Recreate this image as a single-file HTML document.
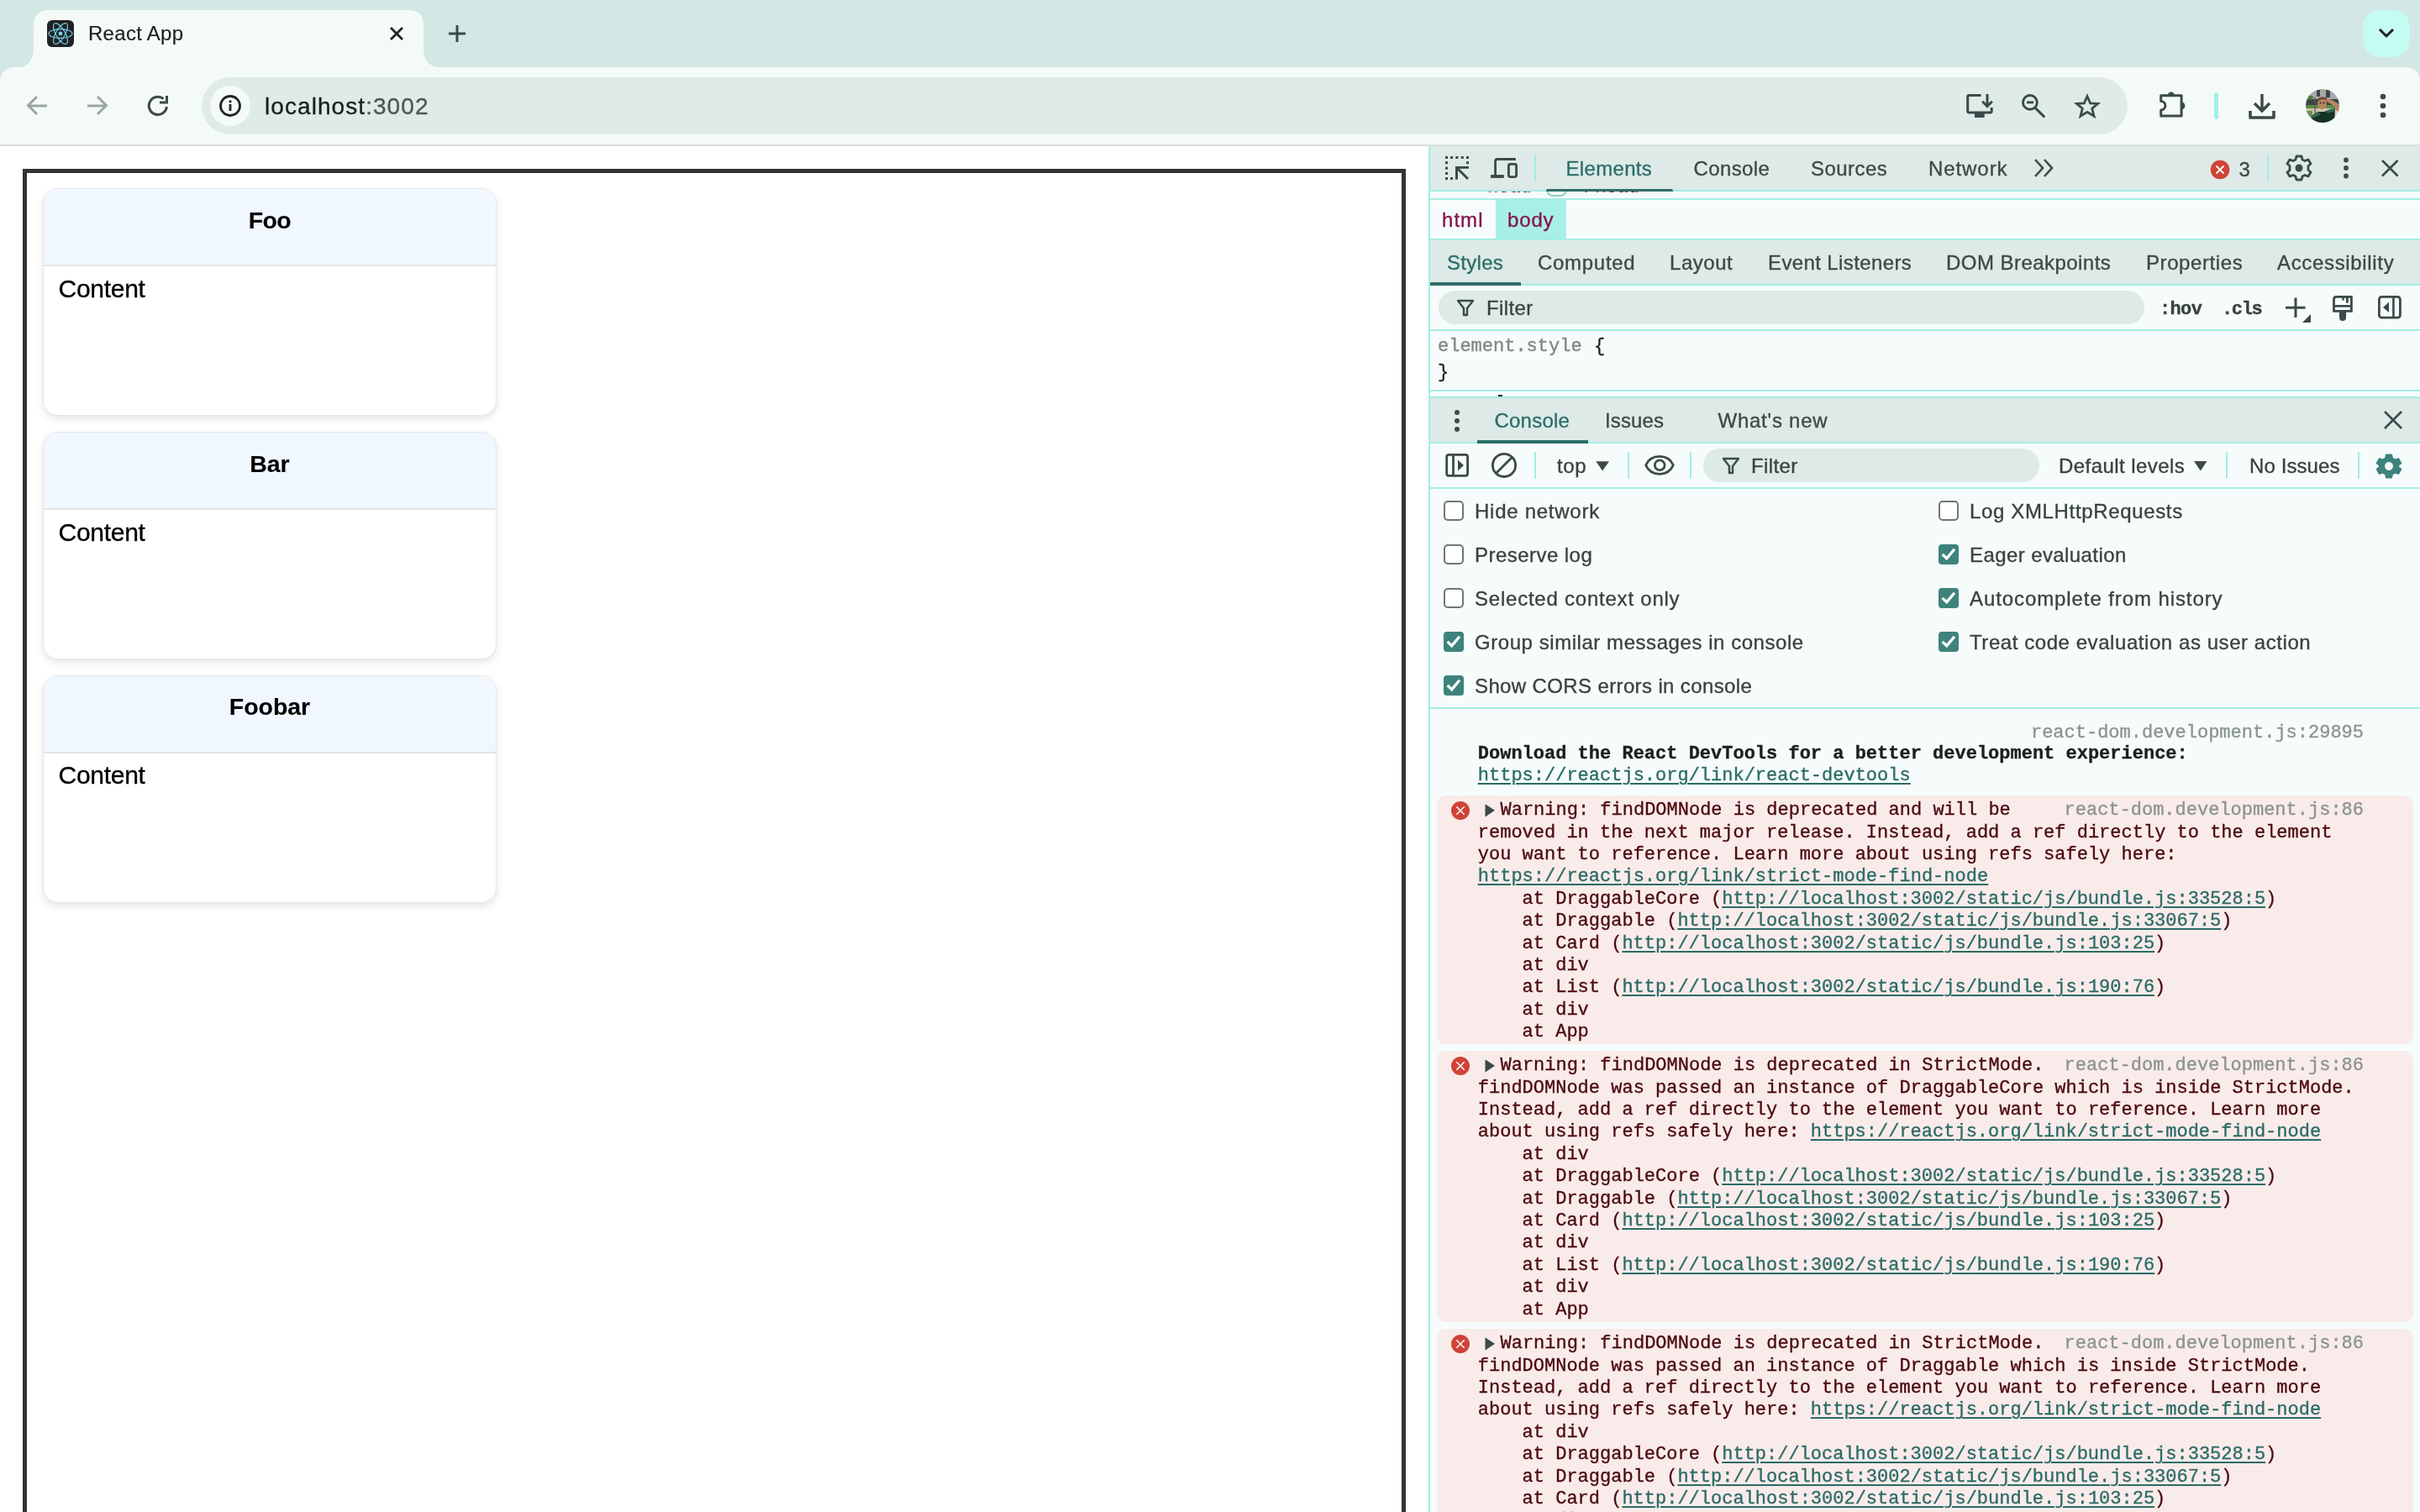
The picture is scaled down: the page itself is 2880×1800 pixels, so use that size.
<!DOCTYPE html>
<html><head><meta charset="utf-8"><title>React App</title>
<style>
html,body{margin:0;padding:0;width:2880px;height:1800px;overflow:hidden;background:#fff}
body{position:relative;font-family:"Liberation Sans",sans-serif}
.t{position:absolute;white-space:pre;line-height:normal;-webkit-text-stroke:0.35px currentColor}
svg{display:block}
@media (max-width:2000px){html{zoom:0.5}}
</style></head><body>
<div style="position:absolute;left:0px;top:0px;width:2880px;height:110px;background:#d3e7e4;"></div>
<div style="position:absolute;left:0px;top:80px;width:2880px;height:93px;background:#f4faf8;border-radius:16px 16px 0 0;"></div>
<svg style="position:absolute;left:0px;top:0px;" width="560" height="81" viewBox="0 0 560 81"><path d="M17 81 Q40 81 40 57 L40 30 Q40 12 58 12 L486 12 Q504 12 504 30 L504 57 Q504 81 527 81 Z" fill="#f4faf8"/></svg>
<svg style="position:absolute;left:56px;top:24px;" width="32" height="32" viewBox="0 0 32 32"><rect x="0" y="0" width="32" height="32" rx="6" fill="#222"/><g fill="none" stroke="#76d0ee" stroke-width="1.15" transform="translate(16 16)"><ellipse rx="14" ry="5.4"/><ellipse rx="14" ry="5.4" transform="rotate(60)"/><ellipse rx="14" ry="5.4" transform="rotate(120)"/></g><circle cx="16" cy="16" r="2.4" fill="#76d0ee"/></svg>
<svg style="position:absolute;left:462px;top:30px;" width="20" height="20" viewBox="0 0 20 20"><path d="M3 3 L17 17 M17 3 L3 17" stroke="#1f2322" stroke-width="2.8" stroke-linecap="butt"/></svg>
<svg style="position:absolute;left:532px;top:28px;" width="24" height="24" viewBox="0 0 24 24"><path d="M12 2 V22 M2 12 H22" stroke="#3b4a48" stroke-width="3"/></svg>
<div style="position:absolute;left:2812px;top:12px;width:56px;height:56px;background:#c4fbf2;border-radius:20px;"></div>
<svg style="position:absolute;left:2828px;top:30px;" width="24" height="20" viewBox="0 0 24 20"><path d="M4 5 L12 13 L20 5" fill="none" stroke="#1b2120" stroke-width="3"/></svg>
<svg style="position:absolute;left:28px;top:110px;" width="32" height="32" viewBox="0 0 32 32"><path d="M28 16 H7 M16 5 L5.5 15.5 L16 26" fill="none" stroke="#9aa6a4" stroke-width="3"/></svg>
<svg style="position:absolute;left:100px;top:110px;" width="32" height="32" viewBox="0 0 32 32"><path d="M4 16 H25 M16 5 L26.5 15.5 L16 26" fill="none" stroke="#9aa6a4" stroke-width="3"/></svg>
<svg style="position:absolute;left:172px;top:110px;" width="32" height="32" viewBox="0 0 32 32"><path d="M26.4 17 A10.6 10.6 0 1 1 22.6 7.7" fill="none" stroke="#3b4a48" stroke-width="3"/><path d="M18 12 H26.5 V4" fill="none" stroke="#3b4a48" stroke-width="3"/></svg>
<div style="position:absolute;left:240px;top:92px;width:2292px;height:68px;background:#dfebe8;border-radius:34px;"></div>
<div style="position:absolute;left:250px;top:102px;width:48px;height:48px;background:#f4faf8;border-radius:24px;"></div>
<svg style="position:absolute;left:258px;top:110px;" width="32" height="32" viewBox="0 0 32 32"><circle cx="16" cy="16" r="11.5" fill="none" stroke="#1f2624" stroke-width="2.8"/><rect x="14.6" y="14" width="2.8" height="8" fill="#1f2624"/><rect x="14.6" y="9.5" width="2.8" height="2.8" fill="#1f2624"/></svg>
<svg style="position:absolute;left:2338px;top:108px;" width="36" height="36" viewBox="0 0 36 36"><path d="M19.6 5.5 H5.5 Q3.7 5.5 3.7 7.3 V24.2 Q3.7 26 5.5 26 H30.4 Q32.2 26 32.2 24.2 V20" fill="none" stroke="#3b4a48" stroke-width="3"/><rect x="12" y="27" width="11.7" height="5" fill="#3b4a48"/><path d="M27 4 V18.5 M21.2 12.8 L27 18.6 L32.8 12.8" fill="none" stroke="#3b4a48" stroke-width="3"/></svg>
<svg style="position:absolute;left:2402px;top:108px;" width="36" height="36" viewBox="0 0 36 36"><circle cx="13.9" cy="13.9" r="8.4" fill="none" stroke="#3b4a48" stroke-width="2.9"/><path d="M10 13.9 H18" stroke="#3b4a48" stroke-width="2.9"/><path d="M20 20.4 L31.2 31.4" stroke="#3b4a48" stroke-width="3"/></svg>
<svg style="position:absolute;left:2466px;top:108px;" width="36" height="36" viewBox="0 0 36 36"><path d="M18 6.5 L21.6 14.8 L30.6 15.4 L23.7 21.3 L26 30.2 L18 25.3 L10 30.2 L12.3 21.3 L5.4 15.4 L14.4 14.8 Z" fill="none" stroke="#3b4a48" stroke-width="2.8" stroke-linejoin="miter"/></svg>
<svg style="position:absolute;left:2566px;top:106px;" width="40" height="40" viewBox="0 0 40 40"><path d="M5.7 7.7 H30.1 V32 H5.7 V25 A5.2 5.2 0 0 0 5.7 14.6 Z" fill="none" stroke="#3b4a48" stroke-width="3" stroke-linejoin="round"/><path d="M13.6 7.7 A4.3 4.3 0 0 1 22.2 7.7 Z" fill="#3b4a48"/><path d="M30.1 15.6 A4.3 4.3 0 0 1 30.1 24.2 Z" fill="#3b4a48"/></svg>
<div style="position:absolute;left:2635px;top:110px;width:5px;height:32px;background:#9ff0e5;border-radius:3px;"></div>
<svg style="position:absolute;left:2672px;top:106px;" width="40" height="40" viewBox="0 0 40 40"><path d="M20 6 V26 M11 17 L20 26 L29 17" fill="none" stroke="#3b4a48" stroke-width="3.4"/><path d="M6 26 V34 H34 V26" fill="none" stroke="#3b4a48" stroke-width="3.6" stroke-linejoin="round"/></svg>
<svg style="position:absolute;left:2744px;top:106px;" width="40" height="40" viewBox="0 0 40 40"><defs><clipPath id="av"><circle cx="20" cy="20" r="20"/></clipPath><filter id="bl"><feGaussianBlur stdDeviation="0.6"/></filter></defs><g clip-path="url(#av)"><g filter="url(#bl)"><rect x="-2" y="-2" width="44" height="44" fill="#cfc7b6"/><rect x="-2" y="-2" width="44" height="14" fill="#a7abab"/><rect x="13" y="1" width="4" height="8" fill="#3d4a52"/><rect x="24" y="1" width="5" height="9" fill="#3c4448"/><rect x="20" y="0" width="2" height="4" fill="#b9a94a"/><rect x="-2" y="12" width="44" height="9" fill="#3a4548"/><rect x="-2" y="19" width="44" height="4" fill="#5d8a4a"/><rect x="-2" y="23" width="16" height="10" fill="#c9c2ad"/><path d="M2 8 Q6 6 10 10 L6 13 Q4 11 2 14 Z" fill="#4f7a3c"/><rect x="10.5" y="10" width="1.2" height="20" fill="#5a5a48"/><rect x="0" y="26" width="8" height="8" fill="#6d8f50"/><rect x="32" y="24" width="10" height="18" fill="#e2d6c3"/><path d="M18 11 Q23 8 29 12 L40 18 L41 27 L36 26 L35 21 L27 16 Z" fill="#b98462"/><ellipse cx="19.5" cy="17.5" rx="5.4" ry="6.8" fill="#b98564"/><path d="M14 12 Q19 7 25 11 L25 13 Q19 11 15 14 Z" fill="#6b4a32"/><circle cx="17.5" cy="16.5" r="0.9" fill="#2a1a12"/><circle cx="21.5" cy="16.5" r="0.9" fill="#2a1a12"/><path d="M4 42 Q6 30 15 27 L22 27 Q30 24 35 23 L34 42 Z" fill="#163024"/><path d="M7 32 Q11 28 16 27.5 L17 31 Q12 32 9 35 Z" fill="#2f6a4f"/><path d="M24 26 Q30 23 35 23 L34 27 Q29 27 26 29 Z" fill="#2f6a4f"/></g></g></svg>
<svg style="position:absolute;left:2826px;top:108px;" width="20" height="36" viewBox="0 0 20 36"><circle cx="10" cy="7" r="3.3" fill="#3b4a48"/><circle cx="10" cy="18" r="3.3" fill="#3b4a48"/><circle cx="10" cy="29" r="3.3" fill="#3b4a48"/></svg>
<div style="position:absolute;left:0px;top:172px;width:2880px;height:2px;background:#d8dfdd;"></div>
<div style="position:absolute;left:0px;top:174px;width:1700px;height:1626px;background:#ffffff;"></div>
<div style="position:absolute;left:27px;top:201px;width:1646px;height:1700px;background:transparent;border:5px solid #333;box-sizing:border-box;"></div>
<div style="position:absolute;left:51px;top:224px;width:540px;height:271px;border-radius:18px;background:#fff;box-shadow:0 4px 10px rgba(0,0,0,0.10);border:1.5px solid #e6e6e6;box-sizing:border-box;overflow:hidden"><div style="height:90px;background:#f0f7fe;border-bottom:2px solid #e2e5e8"></div></div>
<div style="position:absolute;left:51px;top:514px;width:540px;height:271px;border-radius:18px;background:#fff;box-shadow:0 4px 10px rgba(0,0,0,0.10);border:1.5px solid #e6e6e6;box-sizing:border-box;overflow:hidden"><div style="height:90px;background:#f0f7fe;border-bottom:2px solid #e2e5e8"></div></div>
<div style="position:absolute;left:51px;top:804px;width:540px;height:271px;border-radius:18px;background:#fff;box-shadow:0 4px 10px rgba(0,0,0,0.10);border:1.5px solid #e6e6e6;box-sizing:border-box;overflow:hidden"><div style="height:90px;background:#f0f7fe;border-bottom:2px solid #e2e5e8"></div></div>
<div style="position:absolute;left:1700px;top:174px;width:2px;height:1626px;background:#a5ede3;"></div>
<div style="position:absolute;left:1702px;top:174px;width:1178px;height:1626px;background:#f6fcfb;"></div>
<div style="position:absolute;left:1702px;top:174px;width:1178px;height:52px;background:#ddeae7;"></div>
<div style="position:absolute;left:1702px;top:226px;width:1178px;height:2px;background:#a5ede3;"></div>
<div style="position:absolute;left:1840px;top:225px;width:151px;height:3px;background:#2d6e69;border-radius:2px 2px 0 0;"></div>
<svg style="position:absolute;left:1716px;top:183px;" width="36" height="36" viewBox="0 0 36 36"><rect x="4" y="3" width="3" height="3" fill="#3b4a48"/><rect x="10.1" y="3" width="3" height="3" fill="#3b4a48"/><rect x="16.3" y="3" width="3" height="3" fill="#3b4a48"/><rect x="22.8" y="3" width="3" height="3" fill="#3b4a48"/><rect x="29" y="3" width="3" height="3" fill="#3b4a48"/><rect x="4" y="9.2" width="3" height="3" fill="#3b4a48"/><rect x="4" y="15.7" width="3" height="3" fill="#3b4a48"/><rect x="4" y="21.9" width="3" height="3" fill="#3b4a48"/><rect x="4" y="28" width="3" height="3" fill="#3b4a48"/><rect x="29" y="9.2" width="3" height="3" fill="#3b4a48"/><rect x="10.1" y="28" width="3" height="3" fill="#3b4a48"/><rect x="16" y="15" width="3" height="15.7" fill="#3b4a48"/><rect x="16" y="15" width="16" height="2.8" fill="#3b4a48"/><path d="M18.3 17.3 L31 30" stroke="#3b4a48" stroke-width="3"/></svg>
<svg style="position:absolute;left:1772px;top:184px;" width="36" height="36" viewBox="0 0 36 36"><path d="M31.8 5.5 H10 Q7.6 5.5 7.6 8 V25" fill="none" stroke="#3b4a48" stroke-width="2.8"/><rect x="2" y="24.1" width="15.8" height="3.8" fill="#3b4a48"/><rect x="23.4" y="11.4" width="9.2" height="15.2" rx="2" fill="none" stroke="#3b4a48" stroke-width="2.8"/></svg>
<div style="position:absolute;left:1826px;top:184px;width:2px;height:32px;background:#a5ede3;"></div>
<svg style="position:absolute;left:2418px;top:186px;" width="32" height="30" viewBox="0 0 32 30"><path d="M4 4 L13 14 L4 24 M15 4 L24 14 L15 24" fill="none" stroke="#3d4947" stroke-width="2.6"/></svg>
<svg style="position:absolute;left:2630px;top:190px;" width="24" height="24" viewBox="0 0 24 24"><circle cx="12" cy="12" r="11.3" fill="#cf4336"/><path d="M7.5 7.5 L16.5 16.5 M16.5 7.5 L7.5 16.5" stroke="#fff" stroke-width="1.8"/></svg>
<div style="position:absolute;left:2698px;top:184px;width:2px;height:32px;background:#a5ede3;"></div>
<svg style="position:absolute;left:2718px;top:182px;" width="36" height="36" viewBox="0 0 36 36"><g transform="translate(18 18)"><path d="M-3 -14 H3 L4 -10 L7 -8.5 L11 -10 L14 -5 L11 -2.5 V2.5 L14 5 L11 10 L7 8.5 L4 10 L3 14 H-3 L-4 10 L-7 8.5 L-11 10 L-14 5 L-11 2.5 V-2.5 L-14 -5 L-11 -10 L-7 -8.5 L-4 -10 Z" fill="none" stroke="#3b4a48" stroke-width="2.8" stroke-linejoin="round"/><circle r="4.5" fill="#3b4a48"/></g></svg>
<svg style="position:absolute;left:2782px;top:184px;" width="20" height="36" viewBox="0 0 20 36"><circle cx="10" cy="6.5" r="2.9" fill="#3b4a48"/><circle cx="10" cy="16" r="2.9" fill="#3b4a48"/><circle cx="10" cy="25.5" r="2.9" fill="#3b4a48"/></svg>
<svg style="position:absolute;left:2830px;top:186px;" width="28" height="28" viewBox="0 0 28 28"><path d="M5 5 L23.5 23.5 M23.5 5 L5 23.5" stroke="#3b4a48" stroke-width="2.6"/></svg>
<div style="position:absolute;left:1702px;top:228px;width:1178px;height:8px;overflow:hidden"><div style="position:absolute;left:68px;top:-17px;font:22px 'Liberation Mono';color:#8a1a4a">head</div><div style="position:absolute;left:138px;top:-14px;width:21px;height:16px;border:2px solid #8fd0c6;border-radius:8px"></div><div style="position:absolute;left:183px;top:-17px;font:22px 'Liberation Mono';color:#8a1a4a">/head</div></div>
<div style="position:absolute;left:1702px;top:236px;width:1178px;height:2px;background:#a5ede3;"></div>
<div style="position:absolute;left:1702px;top:238px;width:1178px;height:46px;background:#f6fcfb;"></div>
<div style="position:absolute;left:1780px;top:238px;width:84px;height:46px;background:#a8f0e6;"></div>
<div style="position:absolute;left:1702px;top:284px;width:1178px;height:2px;background:#a5ede3;"></div>
<div style="position:absolute;left:1702px;top:286px;width:1178px;height:52px;background:#ddeae7;"></div>
<div style="position:absolute;left:1702px;top:338px;width:1178px;height:2px;background:#a5ede3;"></div>
<div style="position:absolute;left:1702px;top:336px;width:108px;height:4px;background:#2d6e69;"></div>
<div style="position:absolute;left:1712px;top:346px;width:840px;height:40px;background:#ddeae7;border-radius:20px;"></div>
<svg style="position:absolute;left:1732px;top:354px;" width="24" height="24" viewBox="0 0 24 24"><path d="M3 4 H21 L14 13 V21 H10 V13 Z" fill="none" stroke="#3b4a48" stroke-width="2.4" stroke-linejoin="round"/></svg>
<svg style="position:absolute;left:2716px;top:350px;" width="40" height="40" viewBox="0 0 40 40"><path d="M16 4.5 V28 M4 16.2 H27.5" stroke="#3b4a48" stroke-width="3"/><path d="M34 24 V34 H24 Z" fill="#3b4a48"/></svg>
<svg style="position:absolute;left:2772px;top:348px;" width="32" height="40" viewBox="0 0 32 40"><path d="M8.5 5.4 H26.4 V22.4 H5.5 V8.4 Q5.5 5.4 8.5 5.4 Z" fill="none" stroke="#3b4a48" stroke-width="2.8"/><rect x="5" y="15" width="22" height="2.7" fill="#3b4a48"/><rect x="15.3" y="6" width="2.4" height="3.6" fill="#3b4a48"/><rect x="20" y="6" width="2.8" height="6.6" fill="#3b4a48"/><path d="M12 23 H20 V30 A4 4 0 0 1 12 30 Z" fill="#3b4a48"/></svg>
<svg style="position:absolute;left:2826px;top:350px;" width="36" height="36" viewBox="0 0 36 36"><rect x="5.4" y="3.4" width="25" height="24.8" rx="3" fill="none" stroke="#3b4a48" stroke-width="2.8"/><path d="M22.4 4 V28" stroke="#3b4a48" stroke-width="2.6"/><path d="M17 9.6 L10 15.9 L17 22.1 Z" fill="#3b4a48"/></svg>
<div style="position:absolute;left:1702px;top:392px;width:1178px;height:2px;background:#a5ede3;"></div>
<div style="position:absolute;left:1702px;top:464px;width:1178px;height:2px;background:#a5ede3;"></div>
<div style="position:absolute;left:1702px;top:472px;width:1178px;height:2px;background:#a5ede3;"></div>
<div style="position:absolute;left:1783px;top:470px;width:5px;height:2px;background:#1b1f1e;"></div>
<div style="position:absolute;left:1702px;top:474px;width:1178px;height:52px;background:#ddeae7;"></div>
<div style="position:absolute;left:1702px;top:526px;width:1178px;height:2px;background:#a5ede3;"></div>
<div style="position:absolute;left:1758px;top:524px;width:132px;height:4px;background:#2d6e69;"></div>
<svg style="position:absolute;left:1724px;top:484px;" width="20" height="36" viewBox="0 0 20 36"><circle cx="10" cy="7" r="3" fill="#3b4a48"/><circle cx="10" cy="17" r="3" fill="#3b4a48"/><circle cx="10" cy="27" r="3" fill="#3b4a48"/></svg>
<svg style="position:absolute;left:2834px;top:486px;" width="28" height="28" viewBox="0 0 28 28"><path d="M4 4 L24 24 M24 4 L4 24" stroke="#3b4a48" stroke-width="2.6"/></svg>
<div style="position:absolute;left:1702px;top:580px;width:1178px;height:2px;background:#a5ede3;"></div>
<svg style="position:absolute;left:1716px;top:536px;" width="36" height="36" viewBox="0 0 36 36"><rect x="5.7" y="5.4" width="24.9" height="24.9" rx="2.5" fill="none" stroke="#3b4a48" stroke-width="2.8"/><path d="M13.5 5.4 V30.3" stroke="#3b4a48" stroke-width="2.8"/><path d="M19 11.6 L26 18 L19 24.4 Z" fill="#3b4a48"/></svg>
<svg style="position:absolute;left:1772px;top:536px;" width="36" height="36" viewBox="0 0 36 36"><circle cx="18" cy="17.9" r="13.6" fill="none" stroke="#3b4a48" stroke-width="2.8"/><path d="M8.6 27.3 L27.4 8.5" stroke="#3b4a48" stroke-width="2.8"/></svg>
<div style="position:absolute;left:1826px;top:538px;width:2px;height:32px;background:#a5ede3;"></div>
<svg style="position:absolute;left:1898px;top:547px;" width="18" height="16" viewBox="0 0 18 16"><path d="M1.3 2.2 H17 L9.1 13.4 Z" fill="#3b4a48"/></svg>
<div style="position:absolute;left:1937px;top:538px;width:2px;height:32px;background:#a5ede3;"></div>
<svg style="position:absolute;left:1954px;top:538px;" width="42" height="32" viewBox="0 0 42 32"><path d="M4.7 15.8 C8 8 14 5.4 21 5.4 C28 5.4 34 8 37.3 15.8 C34 23.6 28 26.3 21 26.3 C14 26.3 8 23.6 4.7 15.8 Z" fill="none" stroke="#3b4a48" stroke-width="2.8"/><circle cx="21.2" cy="15.8" r="5.9" fill="none" stroke="#3b4a48" stroke-width="2.8"/></svg>
<div style="position:absolute;left:2011px;top:538px;width:2px;height:32px;background:#a5ede3;"></div>
<div style="position:absolute;left:2027px;top:534px;width:400px;height:40px;background:#ddeae7;border-radius:20px;"></div>
<svg style="position:absolute;left:2048px;top:542px;" width="24" height="24" viewBox="0 0 24 24"><path d="M3 4 H21 L14 13 V21 H10 V13 Z" fill="none" stroke="#3b4a48" stroke-width="2.4" stroke-linejoin="round"/></svg>
<svg style="position:absolute;left:2610px;top:547px;" width="18" height="16" viewBox="0 0 18 16"><path d="M1 2 H16.5 L8.8 13.6 Z" fill="#3b4a48"/></svg>
<div style="position:absolute;left:2649px;top:538px;width:2px;height:32px;background:#a5ede3;"></div>
<div style="position:absolute;left:2806px;top:538px;width:2px;height:32px;background:#a5ede3;"></div>
<svg style="position:absolute;left:2827px;top:539px;" width="32" height="32" viewBox="0 0 32 32"><g transform="translate(16 16) scale(0.9)"><path d="M-3.5 -15 H3.5 L4.5 -10.5 L8 -8.5 L12.5 -10 L16 -4 L12.5 -1.5 V1.5 L16 4 L12.5 10 L8 8.5 L4.5 10.5 L3.5 15 H-3.5 L-4.5 10.5 L-8 8.5 L-12.5 10 L-16 4 L-12.5 1.5 V-1.5 L-16 -4 L-12.5 -10 L-8 -8.5 L-4.5 -10.5 Z" fill="#3d837c" stroke="#3d837c" stroke-width="2" stroke-linejoin="round"/><circle r="5.5" fill="#f6fcfb"/></g></svg>
<svg style="position:absolute;left:1718px;top:596px;" width="24" height="24" viewBox="0 0 24 24"><rect x="1" y="1" width="22" height="22" rx="4" fill="#fff" stroke="#6f7775" stroke-width="2"/></svg>
<svg style="position:absolute;left:1718px;top:648px;" width="24" height="24" viewBox="0 0 24 24"><rect x="1" y="1" width="22" height="22" rx="4" fill="#fff" stroke="#6f7775" stroke-width="2"/></svg>
<svg style="position:absolute;left:1718px;top:700px;" width="24" height="24" viewBox="0 0 24 24"><rect x="1" y="1" width="22" height="22" rx="4" fill="#fff" stroke="#6f7775" stroke-width="2"/></svg>
<svg style="position:absolute;left:1718px;top:752px;" width="24" height="24" viewBox="0 0 24 24"><rect x="0" y="0" width="24" height="24" rx="4" fill="#3d837c"/><path d="M4.6 11.9 L9.7 16.8 L19 5.8" fill="none" stroke="#fff" stroke-width="3.3"/></svg>
<svg style="position:absolute;left:1718px;top:804px;" width="24" height="24" viewBox="0 0 24 24"><rect x="0" y="0" width="24" height="24" rx="4" fill="#3d837c"/><path d="M4.6 11.9 L9.7 16.8 L19 5.8" fill="none" stroke="#fff" stroke-width="3.3"/></svg>
<svg style="position:absolute;left:2307px;top:596px;" width="24" height="24" viewBox="0 0 24 24"><rect x="1" y="1" width="22" height="22" rx="4" fill="#fff" stroke="#6f7775" stroke-width="2"/></svg>
<svg style="position:absolute;left:2307px;top:648px;" width="24" height="24" viewBox="0 0 24 24"><rect x="0" y="0" width="24" height="24" rx="4" fill="#3d837c"/><path d="M4.6 11.9 L9.7 16.8 L19 5.8" fill="none" stroke="#fff" stroke-width="3.3"/></svg>
<svg style="position:absolute;left:2307px;top:700px;" width="24" height="24" viewBox="0 0 24 24"><rect x="0" y="0" width="24" height="24" rx="4" fill="#3d837c"/><path d="M4.6 11.9 L9.7 16.8 L19 5.8" fill="none" stroke="#fff" stroke-width="3.3"/></svg>
<svg style="position:absolute;left:2307px;top:752px;" width="24" height="24" viewBox="0 0 24 24"><rect x="0" y="0" width="24" height="24" rx="4" fill="#3d837c"/><path d="M4.6 11.9 L9.7 16.8 L19 5.8" fill="none" stroke="#fff" stroke-width="3.3"/></svg>
<div style="position:absolute;left:1702px;top:842px;width:1178px;height:2px;background:#a5ede3;"></div>
<div style="position:absolute;left:1710px;top:947px;width:1162px;height:295.9px;background:#f9ebea;border-radius:10px;"></div>
<svg style="position:absolute;left:1726px;top:952.6px;" width="24" height="24" viewBox="0 0 24 24"><circle cx="12" cy="12" r="11" fill="#cf4336"/><path d="M7.3 7.3 L16.7 16.7 M16.7 7.3 L7.3 16.7" stroke="#fff" stroke-width="1.5"/></svg>
<svg style="position:absolute;left:1766px;top:955.6px;" width="14" height="18" viewBox="0 0 14 18"><path d="M1.5 1.2 L13 8.8 L1.5 16.4 Z" fill="#3b4a48"/></svg>
<div style="position:absolute;left:1710px;top:1251px;width:1162px;height:322.99999999999994px;background:#f9ebea;border-radius:10px;"></div>
<svg style="position:absolute;left:1726px;top:1256.6px;" width="24" height="24" viewBox="0 0 24 24"><circle cx="12" cy="12" r="11" fill="#cf4336"/><path d="M7.3 7.3 L16.7 16.7 M16.7 7.3 L7.3 16.7" stroke="#fff" stroke-width="1.5"/></svg>
<svg style="position:absolute;left:1766px;top:1259.6px;" width="14" height="18" viewBox="0 0 14 18"><path d="M1.5 1.2 L13 8.8 L1.5 16.4 Z" fill="#3b4a48"/></svg>
<div style="position:absolute;left:1710px;top:1582px;width:1162px;height:322.99999999999994px;background:#f9ebea;border-radius:10px;"></div>
<svg style="position:absolute;left:1726px;top:1587.6px;" width="24" height="24" viewBox="0 0 24 24"><circle cx="12" cy="12" r="11" fill="#cf4336"/><path d="M7.3 7.3 L16.7 16.7 M16.7 7.3 L7.3 16.7" stroke="#fff" stroke-width="1.5"/></svg>
<svg style="position:absolute;left:1766px;top:1590.6px;" width="14" height="18" viewBox="0 0 14 18"><path d="M1.5 1.2 L13 8.8 L1.5 16.4 Z" fill="#3b4a48"/></svg>
<div style="position:absolute;left:0;top:0;width:2880px;height:1800px;will-change:transform">
<div class="t" style="left:105.00px;top:26.28px;font-size:24px;color:#1b1f1e;letter-spacing:0.286px;-webkit-text-stroke:0.15px currentColor;">React App</div>
<div class="t" style="left:315.00px;top:110.66px;font-size:28px;color:#1b1f1e;letter-spacing:1.068px;">localhost<span style="color:#4c5856">:3002</span></div>
<div class="t" style="left:295.75px;top:245.81px;font-size:28.5px;color:#000;font-weight:700;letter-spacing:-0.691px;-webkit-text-stroke:0.1px currentColor;">Foo</div>
<div class="t" style="left:69.50px;top:326.85px;font-size:30px;color:#000;letter-spacing:-0.273px;">Content</div>
<div class="t" style="left:297.35px;top:535.61px;font-size:28.5px;color:#000;font-weight:700;letter-spacing:-0.089px;-webkit-text-stroke:0.1px currentColor;">Bar</div>
<div class="t" style="left:69.50px;top:616.65px;font-size:30px;color:#000;letter-spacing:-0.273px;">Content</div>
<div class="t" style="left:272.80px;top:825.41px;font-size:28.5px;color:#000;font-weight:700;letter-spacing:-0.032px;-webkit-text-stroke:0.1px currentColor;">Foobar</div>
<div class="t" style="left:69.50px;top:906.45px;font-size:30px;color:#000;letter-spacing:-0.273px;">Content</div>
<div class="t" style="left:1863.50px;top:187.28px;font-size:24px;color:#2d6e69;letter-spacing:0.328px;">Elements</div>
<div class="t" style="left:2015.50px;top:187.28px;font-size:24px;color:#3d4947;letter-spacing:0.376px;">Console</div>
<div class="t" style="left:2155.00px;top:187.28px;font-size:24px;color:#3d4947;letter-spacing:0.455px;">Sources</div>
<div class="t" style="left:2295.00px;top:187.28px;font-size:24px;color:#3d4947;letter-spacing:0.920px;">Network</div>
<div class="t" style="left:2664.50px;top:188.28px;font-size:24px;color:#3d4947;">3</div>
<div class="t" style="left:1716.00px;top:248.28px;font-size:24px;color:#85154a;letter-spacing:1.046px;">html</div>
<div class="t" style="left:1794.00px;top:248.28px;font-size:24px;color:#85154a;letter-spacing:0.845px;">body</div>
<div class="t" style="left:1722.00px;top:299.28px;font-size:24px;color:#2d6e69;letter-spacing:0.299px;">Styles</div>
<div class="t" style="left:1830.00px;top:299.28px;font-size:24px;color:#3d4947;letter-spacing:0.703px;">Computed</div>
<div class="t" style="left:1987.00px;top:299.28px;font-size:24px;color:#3d4947;letter-spacing:0.535px;">Layout</div>
<div class="t" style="left:2104.00px;top:299.28px;font-size:24px;color:#3d4947;letter-spacing:0.385px;">Event Listeners</div>
<div class="t" style="left:2316.00px;top:299.28px;font-size:24px;color:#3d4947;letter-spacing:0.455px;">DOM Breakpoints</div>
<div class="t" style="left:2554.00px;top:299.28px;font-size:24px;color:#3d4947;letter-spacing:0.591px;">Properties</div>
<div class="t" style="left:2710.00px;top:299.28px;font-size:24px;color:#3d4947;letter-spacing:0.664px;">Accessibility</div>
<div class="t" style="left:1769.00px;top:353.28px;font-size:24px;color:#38433f;letter-spacing:0.394px;">Filter</div>
<div class="t" style="left:2570.00px;top:355.69px;font-size:22px;color:#38433f;font-weight:700;font-family:'Liberation Mono',monospace;letter-spacing:-0.660px;">:hov</div>
<div class="t" style="left:2644.00px;top:355.69px;font-size:22px;color:#38433f;font-weight:700;font-family:'Liberation Mono',monospace;letter-spacing:-1.374px;">.cls</div>
<div class="t" style="left:1711.00px;top:399.69px;font-size:22px;color:#7d8886;font-family:'Liberation Mono',monospace;">element.style</div>
<div class="t" style="left:1897.00px;top:399.69px;font-size:22px;color:#1b1f1e;font-family:'Liberation Mono',monospace;">{</div>
<div class="t" style="left:1711.00px;top:430.69px;font-size:22px;color:#1b1f1e;font-family:'Liberation Mono',monospace;">}</div>
<div class="t" style="left:1778.50px;top:487.28px;font-size:24px;color:#2d6e69;letter-spacing:0.222px;">Console</div>
<div class="t" style="left:1910.00px;top:487.28px;font-size:24px;color:#3d4947;letter-spacing:0.116px;">Issues</div>
<div class="t" style="left:2044.50px;top:487.28px;font-size:24px;color:#3d4947;letter-spacing:0.759px;">What's new</div>
<div class="t" style="left:1853.00px;top:541.28px;font-size:24px;color:#38433f;letter-spacing:0.655px;">top</div>
<div class="t" style="left:2084.00px;top:541.28px;font-size:24px;color:#38433f;letter-spacing:0.394px;">Filter</div>
<div class="t" style="left:2450.00px;top:541.28px;font-size:24px;color:#38433f;letter-spacing:0.439px;">Default levels</div>
<div class="t" style="left:2677.00px;top:541.28px;font-size:24px;color:#38433f;letter-spacing:0.093px;">No Issues</div>
<div class="t" style="left:1755.00px;top:595.28px;font-size:24px;color:#38433f;letter-spacing:0.734px;">Hide network</div>
<div class="t" style="left:1755.00px;top:647.28px;font-size:24px;color:#38433f;letter-spacing:0.458px;">Preserve log</div>
<div class="t" style="left:1755.00px;top:699.28px;font-size:24px;color:#38433f;letter-spacing:0.774px;">Selected context only</div>
<div class="t" style="left:1755.00px;top:751.28px;font-size:24px;color:#38433f;letter-spacing:0.554px;">Group similar messages in console</div>
<div class="t" style="left:1755.00px;top:803.28px;font-size:24px;color:#38433f;letter-spacing:0.373px;">Show CORS errors in console</div>
<div class="t" style="left:2344.00px;top:595.28px;font-size:24px;color:#38433f;letter-spacing:0.651px;">Log XMLHttpRequests</div>
<div class="t" style="left:2344.00px;top:647.28px;font-size:24px;color:#38433f;letter-spacing:0.411px;">Eager evaluation</div>
<div class="t" style="left:2344.00px;top:699.28px;font-size:24px;color:#38433f;letter-spacing:0.907px;">Autocomplete from history</div>
<div class="t" style="left:2344.00px;top:751.28px;font-size:24px;color:#38433f;letter-spacing:0.563px;">Treat code evaluation as user action</div>
<div class="t" style="left:2416.94px;top:859.68px;font-size:22px;color:#8a9492;font-family:'Liberation Mono',monospace;">react-dom.development.js:29895</div>
<div class="t" style="left:1758.80px;top:884.68px;font-size:22px;color:#1b1f1e;font-weight:700;font-family:'Liberation Mono',monospace;">Download the React DevTools for a better development experience:</div>
<div class="t" style="left:1758.80px;top:910.98px;font-size:22px;color:#2b6b66;font-family:'Liberation Mono',monospace;text-decoration:underline;text-underline-offset:3px;text-decoration-thickness:2px;">https://reactjs.org/link/react-devtools</div>
<div class="t" style="left:1785.50px;top:952.28px;font-size:22px;color:#4b0a0e;font-family:'Liberation Mono',monospace;">Warning: findDOMNode is deprecated and will be</div>
<div class="t" style="left:2456.54px;top:952.28px;font-size:22px;color:#8a9492;font-family:'Liberation Mono',monospace;">react-dom.development.js:86</div>
<div class="t" style="left:1758.80px;top:978.68px;font-size:22px;color:#4b0a0e;font-family:'Liberation Mono',monospace;">removed in the next major release. Instead, add a ref directly to the element</div>
<div class="t" style="left:1758.80px;top:1005.08px;font-size:22px;color:#4b0a0e;font-family:'Liberation Mono',monospace;">you want to reference. Learn more about using refs safely here:</div>
<div class="t" style="left:1758.80px;top:1031.48px;font-size:22px;color:#2b6b66;font-family:'Liberation Mono',monospace;text-decoration:underline;text-underline-offset:3px;text-decoration-thickness:2px;">https://reactjs.org/link/strict-mode-find-node</div>
<div class="t" style="left:1758.80px;top:1057.88px;font-size:22px;color:#4b0a0e;font-family:'Liberation Mono',monospace;">    at DraggableCore (</div>
<div class="t" style="left:2049.20px;top:1057.88px;font-size:22px;color:#2b6b66;font-family:'Liberation Mono',monospace;text-decoration:underline;text-underline-offset:3px;text-decoration-thickness:2px;">http://localhost:3002/static/js/bundle.js:33528:5</div>
<div class="t" style="left:2696.00px;top:1057.88px;font-size:22px;color:#4b0a0e;font-family:'Liberation Mono',monospace;">)</div>
<div class="t" style="left:1758.80px;top:1084.28px;font-size:22px;color:#4b0a0e;font-family:'Liberation Mono',monospace;">    at Draggable (</div>
<div class="t" style="left:1996.40px;top:1084.28px;font-size:22px;color:#2b6b66;font-family:'Liberation Mono',monospace;text-decoration:underline;text-underline-offset:3px;text-decoration-thickness:2px;">http://localhost:3002/static/js/bundle.js:33067:5</div>
<div class="t" style="left:2643.20px;top:1084.28px;font-size:22px;color:#4b0a0e;font-family:'Liberation Mono',monospace;">)</div>
<div class="t" style="left:1758.80px;top:1110.68px;font-size:22px;color:#4b0a0e;font-family:'Liberation Mono',monospace;">    at Card (</div>
<div class="t" style="left:1930.40px;top:1110.68px;font-size:22px;color:#2b6b66;font-family:'Liberation Mono',monospace;text-decoration:underline;text-underline-offset:3px;text-decoration-thickness:2px;">http://localhost:3002/static/js/bundle.js:103:25</div>
<div class="t" style="left:2564.00px;top:1110.68px;font-size:22px;color:#4b0a0e;font-family:'Liberation Mono',monospace;">)</div>
<div class="t" style="left:1758.80px;top:1137.09px;font-size:22px;color:#4b0a0e;font-family:'Liberation Mono',monospace;">    at div</div>
<div class="t" style="left:1758.80px;top:1163.48px;font-size:22px;color:#4b0a0e;font-family:'Liberation Mono',monospace;">    at List (</div>
<div class="t" style="left:1930.40px;top:1163.48px;font-size:22px;color:#2b6b66;font-family:'Liberation Mono',monospace;text-decoration:underline;text-underline-offset:3px;text-decoration-thickness:2px;">http://localhost:3002/static/js/bundle.js:190:76</div>
<div class="t" style="left:2564.00px;top:1163.48px;font-size:22px;color:#4b0a0e;font-family:'Liberation Mono',monospace;">)</div>
<div class="t" style="left:1758.80px;top:1189.88px;font-size:22px;color:#4b0a0e;font-family:'Liberation Mono',monospace;">    at div</div>
<div class="t" style="left:1758.80px;top:1216.28px;font-size:22px;color:#4b0a0e;font-family:'Liberation Mono',monospace;">    at App</div>
<div class="t" style="left:1785.50px;top:1256.28px;font-size:22px;color:#4b0a0e;font-family:'Liberation Mono',monospace;">Warning: findDOMNode is deprecated in StrictMode.</div>
<div class="t" style="left:2456.54px;top:1256.28px;font-size:22px;color:#8a9492;font-family:'Liberation Mono',monospace;">react-dom.development.js:86</div>
<div class="t" style="left:1758.80px;top:1282.68px;font-size:22px;color:#4b0a0e;font-family:'Liberation Mono',monospace;">findDOMNode was passed an instance of DraggableCore which is inside StrictMode.</div>
<div class="t" style="left:1758.80px;top:1309.08px;font-size:22px;color:#4b0a0e;font-family:'Liberation Mono',monospace;">Instead, add a ref directly to the element you want to reference. Learn more</div>
<div class="t" style="left:1758.80px;top:1335.48px;font-size:22px;color:#4b0a0e;font-family:'Liberation Mono',monospace;">about using refs safely here: </div>
<div class="t" style="left:2154.80px;top:1335.48px;font-size:22px;color:#2b6b66;font-family:'Liberation Mono',monospace;text-decoration:underline;text-underline-offset:3px;text-decoration-thickness:2px;">https://reactjs.org/link/strict-mode-find-node</div>
<div class="t" style="left:1758.80px;top:1361.88px;font-size:22px;color:#4b0a0e;font-family:'Liberation Mono',monospace;">    at div</div>
<div class="t" style="left:1758.80px;top:1388.28px;font-size:22px;color:#4b0a0e;font-family:'Liberation Mono',monospace;">    at DraggableCore (</div>
<div class="t" style="left:2049.20px;top:1388.28px;font-size:22px;color:#2b6b66;font-family:'Liberation Mono',monospace;text-decoration:underline;text-underline-offset:3px;text-decoration-thickness:2px;">http://localhost:3002/static/js/bundle.js:33528:5</div>
<div class="t" style="left:2696.00px;top:1388.28px;font-size:22px;color:#4b0a0e;font-family:'Liberation Mono',monospace;">)</div>
<div class="t" style="left:1758.80px;top:1414.68px;font-size:22px;color:#4b0a0e;font-family:'Liberation Mono',monospace;">    at Draggable (</div>
<div class="t" style="left:1996.40px;top:1414.68px;font-size:22px;color:#2b6b66;font-family:'Liberation Mono',monospace;text-decoration:underline;text-underline-offset:3px;text-decoration-thickness:2px;">http://localhost:3002/static/js/bundle.js:33067:5</div>
<div class="t" style="left:2643.20px;top:1414.68px;font-size:22px;color:#4b0a0e;font-family:'Liberation Mono',monospace;">)</div>
<div class="t" style="left:1758.80px;top:1441.08px;font-size:22px;color:#4b0a0e;font-family:'Liberation Mono',monospace;">    at Card (</div>
<div class="t" style="left:1930.40px;top:1441.08px;font-size:22px;color:#2b6b66;font-family:'Liberation Mono',monospace;text-decoration:underline;text-underline-offset:3px;text-decoration-thickness:2px;">http://localhost:3002/static/js/bundle.js:103:25</div>
<div class="t" style="left:2564.00px;top:1441.08px;font-size:22px;color:#4b0a0e;font-family:'Liberation Mono',monospace;">)</div>
<div class="t" style="left:1758.80px;top:1467.48px;font-size:22px;color:#4b0a0e;font-family:'Liberation Mono',monospace;">    at div</div>
<div class="t" style="left:1758.80px;top:1493.88px;font-size:22px;color:#4b0a0e;font-family:'Liberation Mono',monospace;">    at List (</div>
<div class="t" style="left:1930.40px;top:1493.88px;font-size:22px;color:#2b6b66;font-family:'Liberation Mono',monospace;text-decoration:underline;text-underline-offset:3px;text-decoration-thickness:2px;">http://localhost:3002/static/js/bundle.js:190:76</div>
<div class="t" style="left:2564.00px;top:1493.88px;font-size:22px;color:#4b0a0e;font-family:'Liberation Mono',monospace;">)</div>
<div class="t" style="left:1758.80px;top:1520.28px;font-size:22px;color:#4b0a0e;font-family:'Liberation Mono',monospace;">    at div</div>
<div class="t" style="left:1758.80px;top:1546.68px;font-size:22px;color:#4b0a0e;font-family:'Liberation Mono',monospace;">    at App</div>
<div class="t" style="left:1785.50px;top:1587.28px;font-size:22px;color:#4b0a0e;font-family:'Liberation Mono',monospace;">Warning: findDOMNode is deprecated in StrictMode.</div>
<div class="t" style="left:2456.54px;top:1587.28px;font-size:22px;color:#8a9492;font-family:'Liberation Mono',monospace;">react-dom.development.js:86</div>
<div class="t" style="left:1758.80px;top:1613.68px;font-size:22px;color:#4b0a0e;font-family:'Liberation Mono',monospace;">findDOMNode was passed an instance of Draggable which is inside StrictMode.</div>
<div class="t" style="left:1758.80px;top:1640.08px;font-size:22px;color:#4b0a0e;font-family:'Liberation Mono',monospace;">Instead, add a ref directly to the element you want to reference. Learn more</div>
<div class="t" style="left:1758.80px;top:1666.48px;font-size:22px;color:#4b0a0e;font-family:'Liberation Mono',monospace;">about using refs safely here: </div>
<div class="t" style="left:2154.80px;top:1666.48px;font-size:22px;color:#2b6b66;font-family:'Liberation Mono',monospace;text-decoration:underline;text-underline-offset:3px;text-decoration-thickness:2px;">https://reactjs.org/link/strict-mode-find-node</div>
<div class="t" style="left:1758.80px;top:1692.88px;font-size:22px;color:#4b0a0e;font-family:'Liberation Mono',monospace;">    at div</div>
<div class="t" style="left:1758.80px;top:1719.28px;font-size:22px;color:#4b0a0e;font-family:'Liberation Mono',monospace;">    at DraggableCore (</div>
<div class="t" style="left:2049.20px;top:1719.28px;font-size:22px;color:#2b6b66;font-family:'Liberation Mono',monospace;text-decoration:underline;text-underline-offset:3px;text-decoration-thickness:2px;">http://localhost:3002/static/js/bundle.js:33528:5</div>
<div class="t" style="left:2696.00px;top:1719.28px;font-size:22px;color:#4b0a0e;font-family:'Liberation Mono',monospace;">)</div>
<div class="t" style="left:1758.80px;top:1745.68px;font-size:22px;color:#4b0a0e;font-family:'Liberation Mono',monospace;">    at Draggable (</div>
<div class="t" style="left:1996.40px;top:1745.68px;font-size:22px;color:#2b6b66;font-family:'Liberation Mono',monospace;text-decoration:underline;text-underline-offset:3px;text-decoration-thickness:2px;">http://localhost:3002/static/js/bundle.js:33067:5</div>
<div class="t" style="left:2643.20px;top:1745.68px;font-size:22px;color:#4b0a0e;font-family:'Liberation Mono',monospace;">)</div>
<div class="t" style="left:1758.80px;top:1772.08px;font-size:22px;color:#4b0a0e;font-family:'Liberation Mono',monospace;">    at Card (</div>
<div class="t" style="left:1930.40px;top:1772.08px;font-size:22px;color:#2b6b66;font-family:'Liberation Mono',monospace;text-decoration:underline;text-underline-offset:3px;text-decoration-thickness:2px;">http://localhost:3002/static/js/bundle.js:103:25</div>
<div class="t" style="left:2564.00px;top:1772.08px;font-size:22px;color:#4b0a0e;font-family:'Liberation Mono',monospace;">)</div>
<div class="t" style="left:1758.80px;top:1798.48px;font-size:22px;color:#4b0a0e;font-family:'Liberation Mono',monospace;">    at div</div>
<div class="t" style="left:1758.80px;top:1824.88px;font-size:22px;color:#4b0a0e;font-family:'Liberation Mono',monospace;">    at List (</div>
<div class="t" style="left:1930.40px;top:1824.88px;font-size:22px;color:#2b6b66;font-family:'Liberation Mono',monospace;text-decoration:underline;text-underline-offset:3px;text-decoration-thickness:2px;">http://localhost:3002/static/js/bundle.js:190:76</div>
<div class="t" style="left:2564.00px;top:1824.88px;font-size:22px;color:#4b0a0e;font-family:'Liberation Mono',monospace;">)</div>
<div class="t" style="left:1758.80px;top:1851.28px;font-size:22px;color:#4b0a0e;font-family:'Liberation Mono',monospace;">    at div</div>
<div class="t" style="left:1758.80px;top:1877.68px;font-size:22px;color:#4b0a0e;font-family:'Liberation Mono',monospace;">    at App</div>
</div>
</body></html>
